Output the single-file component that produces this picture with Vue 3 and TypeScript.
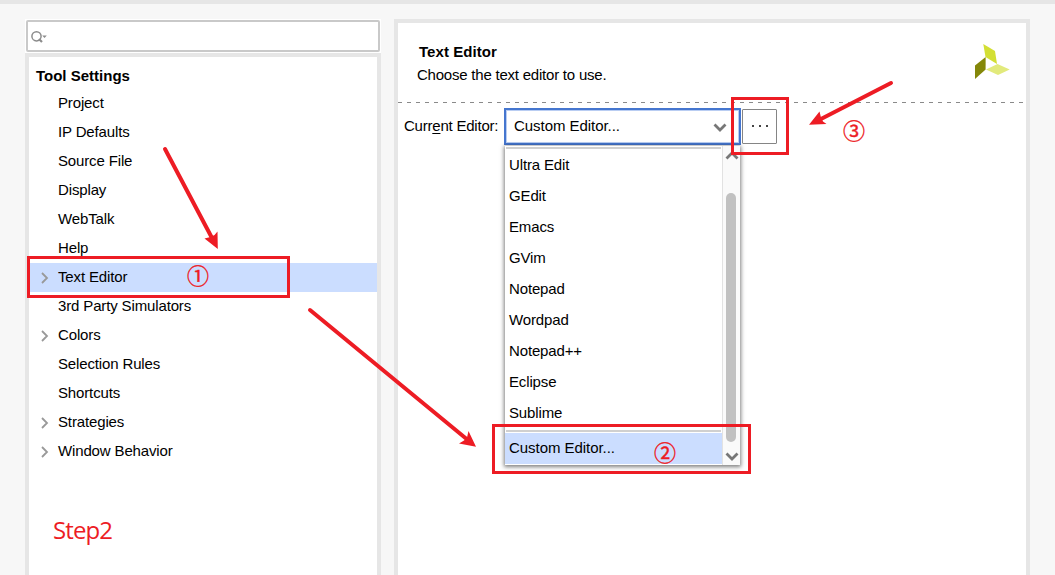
<script setup lang="ts">
interface TreeItem {
  label: string
  expandable?: boolean
  selected?: boolean
}

const treeItems: TreeItem[] = [
  { label: 'Project' },
  { label: 'IP Defaults' },
  { label: 'Source File' },
  { label: 'Display' },
  { label: 'WebTalk' },
  { label: 'Help' },
  { label: 'Text Editor', expandable: true, selected: true },
  { label: '3rd Party Simulators' },
  { label: 'Colors', expandable: true },
  { label: 'Selection Rules' },
  { label: 'Shortcuts' },
  { label: 'Strategies', expandable: true },
  { label: 'Window Behavior', expandable: true },
]

const editors: string[] = [
  'Ultra Edit', 'GEdit', 'Emacs', 'GVim', 'Notepad', 'Wordpad', 'Notepad++', 'Eclipse', 'Sublime',
]
</script>

<template>
  <div class="window">
    <aside class="sidebar">
      <div class="search">
        <svg width="18" height="14" viewBox="0 0 18 14">
          <circle cx="5.500" cy="6.300" r="4.600" fill="none" stroke="#8c8c8c" stroke-width="1.500" />
          <path d="M8 9L11 12" stroke="#8c8c8c" stroke-width="2.200" />
          <path d="M11.200 5.500h4.600L13.500 8z" fill="#8c8c8c" />
        </svg>
      </div>
      <nav class="tree">
        <div class="tree-title">Tool Settings</div>
        <div v-for="item in treeItems" :key="item.label" class="tree-row" :class="{ selected: item.selected }">
          <span class="twisty">
            <svg v-if="item.expandable" width="8" height="12" viewBox="0 0 8 12">
              <path d="M1 1L6 6L1 11" fill="none" stroke="#999" stroke-width="1.800" />
            </svg>
          </span>
          <span class="tree-label">{{ item.label }}</span>
        </div>
      </nav>
    </aside>

    <main class="content">
      <header class="head">
        <div>
          <h1>Text Editor</h1>
          <p>Choose the text editor to use.</p>
        </div>
        <svg class="logo" width="36" height="36" viewBox="0 0 36 36">
          <path d="M8.300 0L20 7L22 20L10.500 13z" fill="#d3df34" />
          <path d="M0 21.500L10.600 13V25.500L0 35z" fill="#848709" />
          <path d="M11 25.500L22.500 20L34.700 25.500L23 31z" fill="#e2ea7c" />
        </svg>
      </header>
      <svg class="rule" width="628" height="1"><path d="M0 .5H626" stroke="#8a8a8a" stroke-dasharray="4 5" /></svg>
      <div class="field">
        <label>Curr<u>e</u>nt Editor:</label>
        <div class="combo">
          <span>Custom Editor...</span>
          <svg width="14" height="10" viewBox="0 0 14 10">
            <path d="M1.500 1.500L7 7L12.500 1.500" fill="none" stroke="#777" stroke-width="2.800" />
          </svg>
          <div class="popup">
            <div class="options">
              <div class="separator"></div>
              <div v-for="name in editors" :key="name" class="option">{{ name }}</div>
              <div class="separator last"></div>
              <div class="option custom">Custom Editor...</div>
            </div>
            <div class="scrollbar">
              <svg width="14" height="9" viewBox="0 0 14 9">
                <path d="M1.500 7.500L7 2L12.500 7.500" fill="none" stroke="#777" stroke-width="2.800" />
              </svg>
              <div class="thumb"></div>
              <svg width="14" height="9" viewBox="0 0 14 9">
                <path d="M1.500 1.500L7 7L12.500 1.500" fill="none" stroke="#777" stroke-width="2.800" />
              </svg>
            </div>
          </div>
        </div>
        <button class="browse"><i></i><i></i><i></i></button>
      </div>
    </main>

    <div class="mark mark-1"></div>
    <div class="mark mark-2"></div>
    <div class="mark mark-3"></div>
    <span class="num num-1">①</span>
    <span class="num num-2">②</span>
    <span class="num num-3">③</span>
    <span class="step">Step2</span>
    <svg class="arrows" width="1055" height="575" viewBox="0 0 1055 575">
      <g stroke="#ed1c24" stroke-width="4" stroke-linecap="round">
        <path d="M165 149L212 238" />
        <path d="M310 310L466 438.500" />
        <path d="M891 83L820 119.500" />
      </g>
      <g fill="#ed1c24">
        <path d="M217.800 249L204.500 238.500L210.500 237L214.500 235L217.500 231.500z" />
        <path d="M476 446.700L459 443.500L464 440.500L467 437.500L468.500 431z" />
        <path d="M809 124.700L819.500 111.500L821 117.500L823 121.500L826.500 124z" />
      </g>
    </svg>
  </div>
</template>

<style>
body {
  overflow: hidden;
}
</style>

<style scoped>
* {
  box-sizing: border-box;
}
.window {
  position: relative;
  display: flex;
  align-items: flex-start;
  gap: 13px;
  width: 1055px;
  height: 575px;
  padding: 15px 25px 0;
  border-top: 4px solid #e6e6e6;
  background: #f7f7f7;
  color: #000;
  font: 15px "Liberation Sans", Arial, sans-serif;
  letter-spacing: -0.14px;
  white-space: nowrap;
  overflow: hidden;
}
.sidebar {
  width: 356px;
  padding-top: 1px;
  background: #fff;
}
.search {
  display: flex;
  align-items: center;
  height: 32px;
  margin: 0 1px 1px;
  padding: 1px 0 0 3px;
  border: 2px solid #c9c9c9;
  border-radius: 2px;
}
.tree {
  height: 540px;
  border: 4px solid #e6e6e6;
}
.tree-title {
  height: 32px;
  padding-left: 7px;
  font-weight: bold;
  letter-spacing: 0;
  line-height: 38px;
}
.tree-row {
  display: flex;
  align-items: center;
  height: 29px;
}
.tree-label {
  padding-bottom: 2px;
}
.twisty {
  display: flex;
  width: 29px;
  padding: 1px 0 0 12px;
}
.selected {
  background: #cbddff;
}
.content {
  width: 636px;
  height: 575px;
  border: 4px solid #e6e6e6;
  background: #fff;
}
.head {
  display: flex;
  justify-content: space-between;
  height: 79px;
  padding: 20px 15px 0 19px;
}
h1,
p {
  margin: 0;
  font-size: 15px;
  line-height: 18px;
}
h1 {
  padding-left: 2px;
  letter-spacing: 0.05px;
}
p {
  margin-top: 5px;
  letter-spacing: -0.22px;
}
.logo {
  margin-top: 1px;
}
.rule {
  display: block;
}
.field {
  display: flex;
  padding: 5px 0 0 6px;
}
label {
  width: 100px;
  letter-spacing: -0.22px;
  line-height: 36px;
}
u {
  text-underline-offset: 2px;
}
.combo {
  position: relative;
  display: flex;
  justify-content: space-between;
  align-items: center;
  width: 237px;
  height: 37px;
  padding: 0 12px 0 7px;
  border: 2px solid #4576cf;
  box-shadow: inset 0 0 0 1px #b9cdf2;
}
.combo > span {
  padding: 0 0 2px 1px;
  letter-spacing: -0.05px;
}
.combo > svg {
  margin-top: 2px;
}
.popup {
  position: absolute;
  left: -1px;
  top: 36px;
  display: flex;
  width: 235px;
  height: 319px;
  background: #fff;
  box-shadow: 0 1px 4px 1px rgba(0, 0, 0, 0.5);
}
.options {
  width: 217px;
  padding-top: 1px;
}
.separator {
  width: 215px;
  height: 2px;
  margin: 0 0 1px 1px;
  background: #d0d0d0;
}
.option {
  height: 31px;
  padding-left: 4px;
  line-height: 30px;
}
.last {
  margin: 1px 0 1px 1px;
}
.custom {
  background: #cbddff;
  letter-spacing: -0.05px;
}
.scrollbar {
  display: flex;
  flex-direction: column;
  align-items: center;
  width: 18px;
  padding: 5px 0 2px;
  border-left: 1px solid #e2e2e2;
  background: #fafafa;
}
.thumb {
  width: 10px;
  height: 249px;
  margin: 33px 1px 10px 0;
  border-radius: 5px;
  background: #c1c1c1;
}
.browse {
  display: flex;
  justify-content: center;
  align-items: center;
  gap: 5px;
  width: 35px;
  height: 35px;
  margin: 1px 0 0 1px;
  padding: 0 0 1px 1px;
  border: 1px solid #858585;
  border-radius: 1px;
  background: #fff;
}
.browse i {
  width: 2px;
  height: 2px;
  background: #444;
}
.mark {
  position: absolute;
  border: 3px solid #ed1c24;
}
.mark-1 {
  left: 27px;
  top: 252px;
  width: 263px;
  height: 42px;
}
.mark-2 {
  left: 492px;
  top: 420px;
  width: 259px;
  height: 50px;
}
.mark-3 {
  left: 731px;
  top: 93px;
  width: 58px;
  height: 58px;
}
.num {
  position: absolute;
  display: flex;
  justify-content: center;
  width: 26px;
  color: #ed1c24;
  font: 22px/26px "Noto Sans CJK SC", sans-serif;
  letter-spacing: 0;
  -webkit-text-stroke: 0.4px #ed1c24;
}
.num-1 {
  left: 185px;
  top: 257px;
}
.num-2 {
  left: 652px;
  top: 434px;
}
.num-3 {
  left: 841px;
  top: 112px;
}
.step {
  position: absolute;
  left: 53px;
  top: 510px;
  color: #ed1c24;
  font: 24px/32px "Open Sans", sans-serif;
  letter-spacing: -0.9px;
}
.arrows {
  position: absolute;
  left: 0;
  top: -4px;
}
</style>
